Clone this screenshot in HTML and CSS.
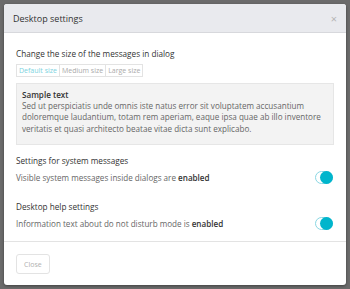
FILE: index.html
```html
<!DOCTYPE html>
<html lang="en">
<head>
    <meta charset="UTF-8">
    <meta name="viewport" content="width=device-width, initial-scale=1.0">
    <link rel="stylesheet" href="styles.css">
    <title>Desktop settings</title>
</head>
<body>

<div class="dialog">
    <div class="dialog-header">
        <span class="dialog-title">Desktop settings</span>
        <span class="dialog-close">&times;</span>
    </div>

    <div class="dialog-body">
        <div class="section size-section">
            <p class="section-title">Change the size of the messages in dialog</p>
            <div class="size-group">
                <button class="size-btn active">Default size</button>
                <button class="size-btn">Medium size</button>
                <button class="size-btn">Large size</button>
            </div>
            <div class="sample">
                <p class="sample-title">Sample text</p>
                <p class="sample-text">Sed ut perspiciatis unde omnis iste natus error sit voluptatem accusantium doloremque laudantium, totam rem aperiam, eaque ipsa quae ab illo inventore veritatis et quasi architecto beatae vitae dicta sunt explicabo.</p>
            </div>
        </div>

        <div class="section">
            <p class="section-title">Settings for system messages</p>
            <div class="setting-row">
                <span>Visible system messages inside dialogs are <b>enabled</b></span>
                <span class="toggle on"></span>
            </div>
        </div>

        <div class="section">
            <p class="section-title">Desktop help settings</p>
            <div class="setting-row">
                <span>Information text about do not disturb mode is <b>enabled</b></span>
                <span class="toggle on"></span>
            </div>
        </div>
    </div>

    <div class="dialog-footer">
        <button class="close-btn">Close</button>
    </div>
</div>

</body>
</html>
```

FILE: styles.css
```css
body {
    margin: 0;
    padding: 4px;
    background: #6b6b6b;
    font-family: "Open Sans", sans-serif;
    color: #333;
}

p {
    margin: 0;
}

.dialog {
    background: #fff;
    border-radius: 3px;
    overflow: hidden;
    box-shadow: 0 1px 3px rgba(0, 0, 0, 0.4);
}

.dialog-header {
    display: flex;
    justify-content: space-between;
    align-items: center;
    height: 28px;
    padding: 0 9px;
    background: #e9eaee;
    border-bottom: 1px solid #d7d8dc;
}

.dialog-title {
    font-size: 9px;
    color: #333;
}

.dialog-close {
    font-size: 11px;
    color: #b5b5b5;
}

.dialog-body {
    padding: 15px 12px 11px;
}

.section {
    margin-bottom: 17px;
}

.section.size-section {
    margin-bottom: 10px;
}

.section:last-child {
    margin-bottom: 0;
}

.section-title {
    font-size: 8.2px;
    line-height: 12px;
    color: #333;
    margin-bottom: 4px;
}

.size-group {
    display: flex;
    margin-bottom: 6px;
}

.size-btn {
    font-family: inherit;
    font-size: 7px;
    line-height: 11px;
    padding: 0 2px;
    background: #fff;
    border: 1px solid #e3e3e3;
    color: #aaa;
    margin: 0 0 0 -1px;
}

.size-btn:first-child {
    margin-left: 0;
}

.size-btn.active {
    color: #7cd3e0;
}

.sample {
    background: #f3f3f3;
    border: 1px solid #e6e6e6;
    padding: 5px 5px 10px;
}

.sample-title {
    font-size: 8.1px;
    font-weight: 600;
    line-height: 11px;
    color: #333;
}

.sample-text {
    font-size: 8.1px;
    line-height: 11.3px;
    color: #666;
}

.setting-row {
    display: flex;
    justify-content: space-between;
    align-items: center;
    font-size: 8.1px;
    color: #666;
    padding-right: 1px;
}

.setting-row b {
    font-weight: 600;
    color: #333;
}

.toggle {
    position: relative;
    width: 16px;
    height: 11px;
    border: 1px solid #8ad7e3;
    border-radius: 7px;
    background: #fff;
}

.toggle.on::after {
    content: "";
    position: absolute;
    right: -1px;
    top: -1px;
    width: 13px;
    height: 13px;
    border-radius: 50%;
    background: #00b5cc;
}

.dialog-footer {
    border-top: 1px solid #e3e3e3;
    padding: 8px 12px 11px;
}

.close-btn {
    font-family: inherit;
    font-size: 7px;
    height: 20px;
    padding: 0 7px;
    background: #fff;
    border: 1px solid #e3e3e3;
    border-radius: 3px;
    color: #b0b0b0;
}
```
